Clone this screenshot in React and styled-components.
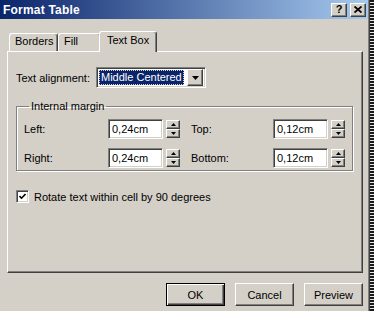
import React from "react";
import styled, { createGlobalStyle, css } from "styled-components";

const GlobalStyle = createGlobalStyle`
  html, body { margin: 0; padding: 0; }
  body {
    width: 374px;
    height: 311px;
    overflow: hidden;
    background: repeating-linear-gradient(180deg, #1a1a1a 0 2px, #e8e8e8 2px 3px);
    font-family: "Liberation Sans", Arial, sans-serif;
    font-size: 11px;
    color: #000;
  }
  * { box-sizing: border-box; }
`;

const raised = css`
  border-style: solid;
  border-width: 1px;
  border-color: #fff #404040 #404040 #fff;
  box-shadow: inset -1px -1px 0 #808080, inset 1px 1px 0 #d4d0c8;
`;

const sunken = css`
  border-style: solid;
  border-width: 1px;
  border-color: #808080 #fff #fff #808080;
  box-shadow: inset 1px 1px 0 #404040, inset -1px -1px 0 #d4d0c8;
`;

const Window = styled.div`
  width: 370px;
  height: 311px;
  background: #d4d0c8;
  border-right: 1px solid #404040;
  box-shadow: inset -1px 0 0 #808080;
  display: flex;
  flex-direction: column;
`;

const TitleBar = styled.div`
  height: 19px;
  margin-right: 1px;
  background: linear-gradient(to right, #0a246a, #a6caf0);
  display: flex;
  align-items: center;
  justify-content: space-between;
  padding: 0 2px 0 3px;
`;

const TitleText = styled.span`
  color: #fff;
  font-weight: bold;
  font-size: 12px;
  letter-spacing: 0.2px;
`;

const TitleButtons = styled.div`
  display: flex;
  gap: 3px;
`;

const TitleButton = styled.div`
  width: 16px;
  height: 14px;
  background: #d4d0c8;
  ${raised};
  display: flex;
  align-items: center;
  justify-content: center;
  font-weight: bold;
  font-size: 11px;
  line-height: 1;
  color: #000;
`;

const Body = styled.div`
  padding: 12px 6px 0 7px;
  display: flex;
  flex-direction: column;
`;

const TabStrip = styled.div`
  display: flex;
  align-items: flex-end;
  height: 20px;
  padding-left: 2px;
  position: relative;
  z-index: 1;
`;

const Tab = styled.div`
  width: ${(p) => p.$w}px;
  height: ${(p) => (p.$active ? 21 : 18)}px;
  margin: ${(p) => (p.$active ? "0 -2px -1px -2px" : "0")};
  padding: ${(p) => (p.$active ? "2px 0 0 7px" : "1px 0 0 5px")};
  background: #d4d0c8;
  border-top: 1px solid #fff;
  border-left: 1px solid #fff;
  border-right: 1px solid #404040;
  box-shadow: inset -1px 0 0 #808080;
  border-radius: 3px 3px 0 0;
  white-space: nowrap;
  line-height: 13px;
`;

const Panel = styled.div`
  height: 222px;
  border-style: solid;
  border-width: 1px;
  border-color: #fff #404040 #404040 #fff;
  box-shadow: inset -1px -1px 0 #808080;
  padding: 15px 9px 0 8px;
  display: flex;
  flex-direction: column;
`;

const AlignRow = styled.div`
  display: flex;
  align-items: center;
`;

const Label = styled.span`
  width: ${(p) => p.$w || "auto"};
  flex: none;
  white-space: nowrap;
`;

const Select = styled.div`
  width: 110px;
  height: 21px;
  background: #fff;
  ${sunken};
  display: flex;
  align-items: center;
  padding: 2px;
  gap: 3px;
`;

const SelectValue = styled.div`
  flex: 1;
  height: 15px;
  background: #0a246a;
  color: #fff;
  outline: 1px dotted #d4d0c8;
  outline-offset: -1px;
  padding-left: 2px;
  line-height: 15px;
  white-space: nowrap;
`;

const DropButton = styled.div`
  width: 16px;
  height: 17px;
  background: #d4d0c8;
  ${raised};
  display: flex;
  align-items: center;
  justify-content: center;
`;

const Group = styled.fieldset`
  margin: 12px 0 0 0;
  padding: 6px 7px 0 7px;
  min-width: 0;
  height: 71px;
  border: 1px solid #808080;
  box-shadow: inset 1px 1px 0 #fff, 1px 1px 0 #fff;
`;

const Legend = styled.legend`
  padding: 0 2px;
  margin-left: 5px;
  line-height: 13px;
`;

const Grid = styled.div`
  display: grid;
  grid-template-columns: 84px 83px 82px 72px;
  grid-auto-rows: 20px;
  row-gap: 9px;
  align-items: center;
`;

const SpinField = styled.div`
  display: flex;
  align-items: center;
  gap: 3px;
`;

const TextInput = styled.div`
  width: 55px;
  height: 20px;
  background: #fff;
  ${sunken};
  padding: 0 0 0 3px;
  line-height: 18px;
`;

const Spinner = styled.div`
  width: 14px;
  height: 18px;
  display: flex;
  flex-direction: column;
`;

const SpinHalf = styled.div`
  flex: 1;
  background: #d4d0c8;
  ${raised};
  display: flex;
  align-items: center;
  justify-content: center;
`;

const CheckRow = styled.label`
  display: flex;
  align-items: center;
  gap: 5px;
  margin-top: 19px;
`;

const CheckBox = styled.div`
  width: 13px;
  height: 13px;
  background: #fff;
  ${sunken};
  display: flex;
  align-items: center;
  justify-content: center;
`;

const ButtonRow = styled.div`
  display: flex;
  justify-content: flex-end;
  gap: 10px;
  margin-top: 10px;
`;

const Button = styled.div`
  width: 59px;
  height: 23px;
  background: #d4d0c8;
  display: flex;
  align-items: center;
  justify-content: center;
  ${(p) =>
    p.$default
      ? css`
          border: 1px solid #000;
          box-shadow: inset 1px 1px 0 #fff, inset -1px -1px 0 #404040,
            inset -2px -2px 0 #808080;
        `
      : raised}
`;

const UpArrow = () => (
  <svg width="5" height="3" viewBox="0 0 5 3">
    <path d="M2.5 0 L5 3 L0 3 Z" fill="#000" />
  </svg>
);
const DownArrow = ({ w = 5, h = 3 }) => (
  <svg width={w} height={h} viewBox={`0 0 ${w} ${h}`}>
    <path d={`M0 0 L${w} 0 L${w / 2} ${h} Z`} fill="#000" />
  </svg>
);

const Spin = ({ value }) => (
  <SpinField>
    <TextInput>{value}</TextInput>
    <Spinner>
      <SpinHalf>
        <UpArrow />
      </SpinHalf>
      <SpinHalf>
        <DownArrow />
      </SpinHalf>
    </Spinner>
  </SpinField>
);

export default function App() {
  return (
    <>
      <GlobalStyle />
      <Window>
        <TitleBar>
          <TitleText>Format Table</TitleText>
          <TitleButtons>
            <TitleButton>?</TitleButton>
            <TitleButton>
              <svg width="8" height="7" viewBox="0 0 8 7">
                <path d="M0.5 0.5 L7.5 6.5 M7.5 0.5 L0.5 6.5" stroke="#000" strokeWidth="1.8" />
              </svg>
            </TitleButton>
          </TitleButtons>
        </TitleBar>
        <Body>
          <TabStrip>
            <Tab $w={49}>Borders</Tab>
            <Tab $w={43}>Fill</Tab>
            <Tab $w={58} $active>
              Text Box
            </Tab>
          </TabStrip>
          <Panel>
            <AlignRow>
              <Label $w="80px">Text alignment:</Label>
              <Select>
                <SelectValue>Middle Centered</SelectValue>
                <DropButton>
                  <DownArrow w={7} h={4} />
                </DropButton>
              </Select>
            </AlignRow>
            <Group>
              <Legend>Internal margin</Legend>
              <Grid>
                <Label>Left:</Label>
                <Spin value="0,24cm" />
                <Label>Top:</Label>
                <Spin value="0,12cm" />
                <Label>Right:</Label>
                <Spin value="0,24cm" />
                <Label>Bottom:</Label>
                <Spin value="0,12cm" />
              </Grid>
            </Group>
            <CheckRow>
              <CheckBox>
                <svg width="7" height="7" viewBox="0 0 7 7">
                  <path d="M0.5 3 L2.5 5.2 L6.5 1" stroke="#000" strokeWidth="1.6" fill="none" />
                </svg>
              </CheckBox>
              <span>Rotate text within cell by 90 degrees</span>
            </CheckRow>
          </Panel>
          <ButtonRow>
            <Button $default>OK</Button>
            <Button>Cancel</Button>
            <Button>Preview</Button>
          </ButtonRow>
        </Body>
      </Window>
    </>
  );
}
